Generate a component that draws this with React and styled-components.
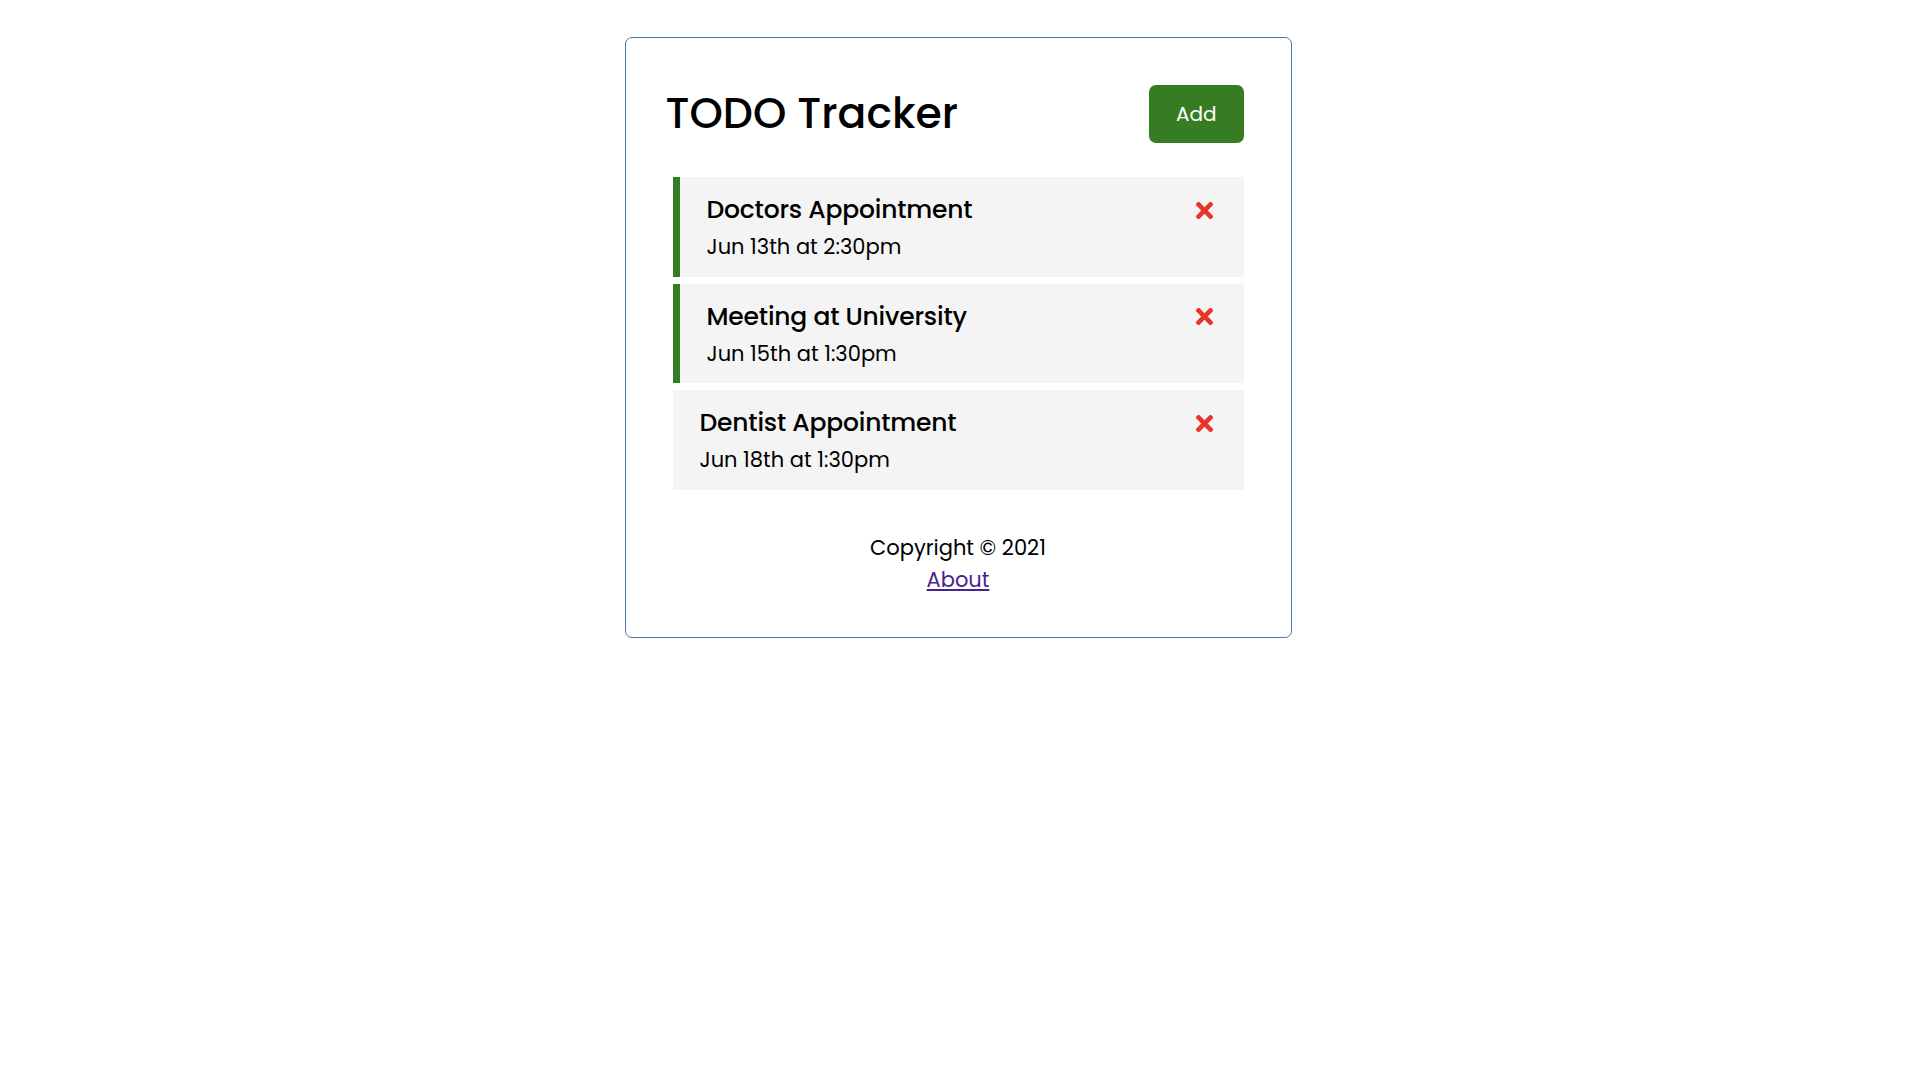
import React, { useState } from "react";
import styled, { createGlobalStyle } from "styled-components";
import { FaTimes } from "react-icons/fa";

const GlobalStyle = createGlobalStyle`
  * {
    box-sizing: border-box;
    margin: 0;
    padding: 0;
  }
  body {
    font-family: "Poppins", "Inter", "Noto Sans", sans-serif;
    background: #fff;
    color: #000;
  }
`;

const Container = styled.div`
  width: 667px;
  min-height: 400px;
  margin: 37px auto;
  padding: 40px;
  border: 1px solid #4a7bab;
  border-radius: 7px;
  overflow: auto;
  position: relative;
  left: -2px;
`;

const Header = styled.header`
  display: flex;
  align-items: center;
  justify-content: space-between;
  margin-bottom: 27px;
`;

const Title = styled.h1`
  font-size: 42.5px;
  font-weight: 500;
  line-height: 1.5;
`;

const Button = styled.button`
  display: inline-block;
  background: ${(p) => p.color || "#000"};
  color: #fff;
  border: none;
  border-radius: 7px;
  margin: 7px;
  padding: 13px 27px;
  font-family: inherit;
  font-size: 20px;
  line-height: 1.6;
  cursor: pointer;
`;

const Task = styled.div`
  background: #f4f4f4;
  margin: 7px;
  padding: 13px 27px;
  border-left: ${(p) => (p.reminder ? "7px solid #367c22" : "none")};
  cursor: pointer;
`;

const TaskTitle = styled.h3`
  display: flex;
  align-items: center;
  justify-content: space-between;
  font-size: 25px;
  font-weight: 500;
  line-height: 1.6;
  letter-spacing: -0.2px;
`;

const TaskDay = styled.p`
  font-size: 21px;
  line-height: 1.6;
`;

const DeleteIcon = styled(FaTimes)`
  color: #e8352a;
  font-size: 25px;
  margin-right: 0;
  cursor: pointer;
`;

const Footer = styled.footer`
  margin-top: 42px;
  text-align: center;
  font-size: 21px;
  line-height: 1.55;
`;

const Link = styled.a`
  color: #4a2391;
  text-decoration: underline;
`;

const initialTasks = [
  { id: 1, text: "Doctors Appointment", day: "Jun 13th at 2:30pm", reminder: true },
  { id: 2, text: "Meeting at University", day: "Jun 15th at 1:30pm", reminder: true },
  { id: 3, text: "Dentist Appointment", day: "Jun 18th at 1:30pm", reminder: false },
];

const App = () => {
  const [tasks, setTasks] = useState(initialTasks);

  const deleteTask = (id) => setTasks(tasks.filter((t) => t.id !== id));
  const toggleReminder = (id) =>
    setTasks(tasks.map((t) => (t.id === id ? { ...t, reminder: !t.reminder } : t)));

  return (
    <>
      <GlobalStyle />
      <Container>
        <Header>
          <Title>TODO Tracker</Title>
          <Button color="#367c22">Add</Button>
        </Header>
        {tasks.map((task) => (
          <Task key={task.id} reminder={task.reminder} onDoubleClick={() => toggleReminder(task.id)}>
            <TaskTitle>
              {task.text}
              <DeleteIcon onClick={() => deleteTask(task.id)} />
            </TaskTitle>
            <TaskDay>{task.day}</TaskDay>
          </Task>
        ))}
        <Footer>
          <p>Copyright &copy; 2021</p>
          <Link href="#about">About</Link>
        </Footer>
      </Container>
    </>
  );
};

export default App;
